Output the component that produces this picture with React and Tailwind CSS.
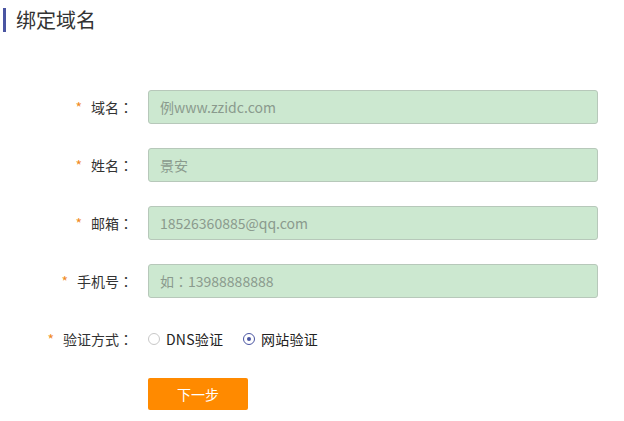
import { useState } from 'react'

const fields = [
  { label: '域名', value: '例www.zzidc.com' },
  { label: '姓名', value: '景安' },
  { label: '邮箱', value: '18526360885@qq.com' },
  { label: '手机号', value: '如：13988888888' },
]

// Centered full-width colon (SC puts it to the left of the box)
function Colon() {
  return <span style={{ fontFamily: '"Noto Sans CJK JP", sans-serif' }}>：</span>
}

function Label({ children }) {
  return (
    <div className="flex w-[133px] shrink-0 items-center justify-end text-[14px] text-[#333]">
      <span className="mr-[9px] text-[#f08a24]">*</span>
      {children}
      <Colon />
    </div>
  )
}

function Radio({ checked, label, onClick }) {
  return (
    <button type="button" onClick={onClick} className="flex items-center text-[14px] tracking-[0.2px] text-[#222]">
      <span
        className={
          checked
            ? 'mr-[6px] flex h-[12px] w-[12px] items-center justify-center rounded-full border border-[#4a55a2] bg-white'
            : 'mr-[6px] flex h-[12px] w-[12px] items-center justify-center rounded-full border border-[#c8c8c8] bg-white'
        }
      >
        {checked && <span className="h-[4px] w-[4px] rounded-full bg-[#4a55a2]" />}
      </span>
      {label}
    </button>
  )
}

export default function App() {
  const [method, setMethod] = useState('site')

  return (
    <div
      className="h-[421px] w-[624px] bg-white"
      style={{ fontFamily: '"Microsoft YaHei", "Noto Sans CJK SC", sans-serif' }}
    >
      {/* Title */}
      <div className="flex items-center pt-[8px]">
        <div className="ml-[3px] h-[24px] w-[3px] bg-[#4a55a2]" />
        <h1 className="ml-[10px] text-[20px] leading-[24px] text-[#333]">绑定域名</h1>
      </div>

      {/* Form */}
      <div className="mt-[58px] flex flex-col gap-[24px]">
        {fields.map((f) => (
          <div key={f.label} className="flex items-center">
            <Label>{f.label}</Label>
            <div className="ml-[15px] flex h-[34px] w-[450px] items-center rounded-[3px] border border-[#b7c8ba] bg-[#cce8d0] px-[11px] text-[14px] text-[#8a9a8d]">
              {f.value.startsWith('如：') ? (
                <>
                  如<Colon />
                  {f.value.slice(2)}
                </>
              ) : (
                f.value
              )}
            </div>
          </div>
        ))}

        <div className="flex h-[34px] items-center">
          <Label>验证方式</Label>
          <div className="ml-[15px] flex items-center gap-[20px]">
            <Radio checked={method === 'dns'} label="DNS验证" onClick={() => setMethod('dns')} />
            <Radio checked={method === 'site'} label="网站验证" onClick={() => setMethod('site')} />
          </div>
        </div>
      </div>

      <div className="ml-[148px] mt-[22px]">
        <button
          type="button"
          className="h-[32px] w-[100px] rounded-[2px] bg-[#ff8a00] text-[14px] text-white"
        >
          下一步
        </button>
      </div>
    </div>
  )
}
